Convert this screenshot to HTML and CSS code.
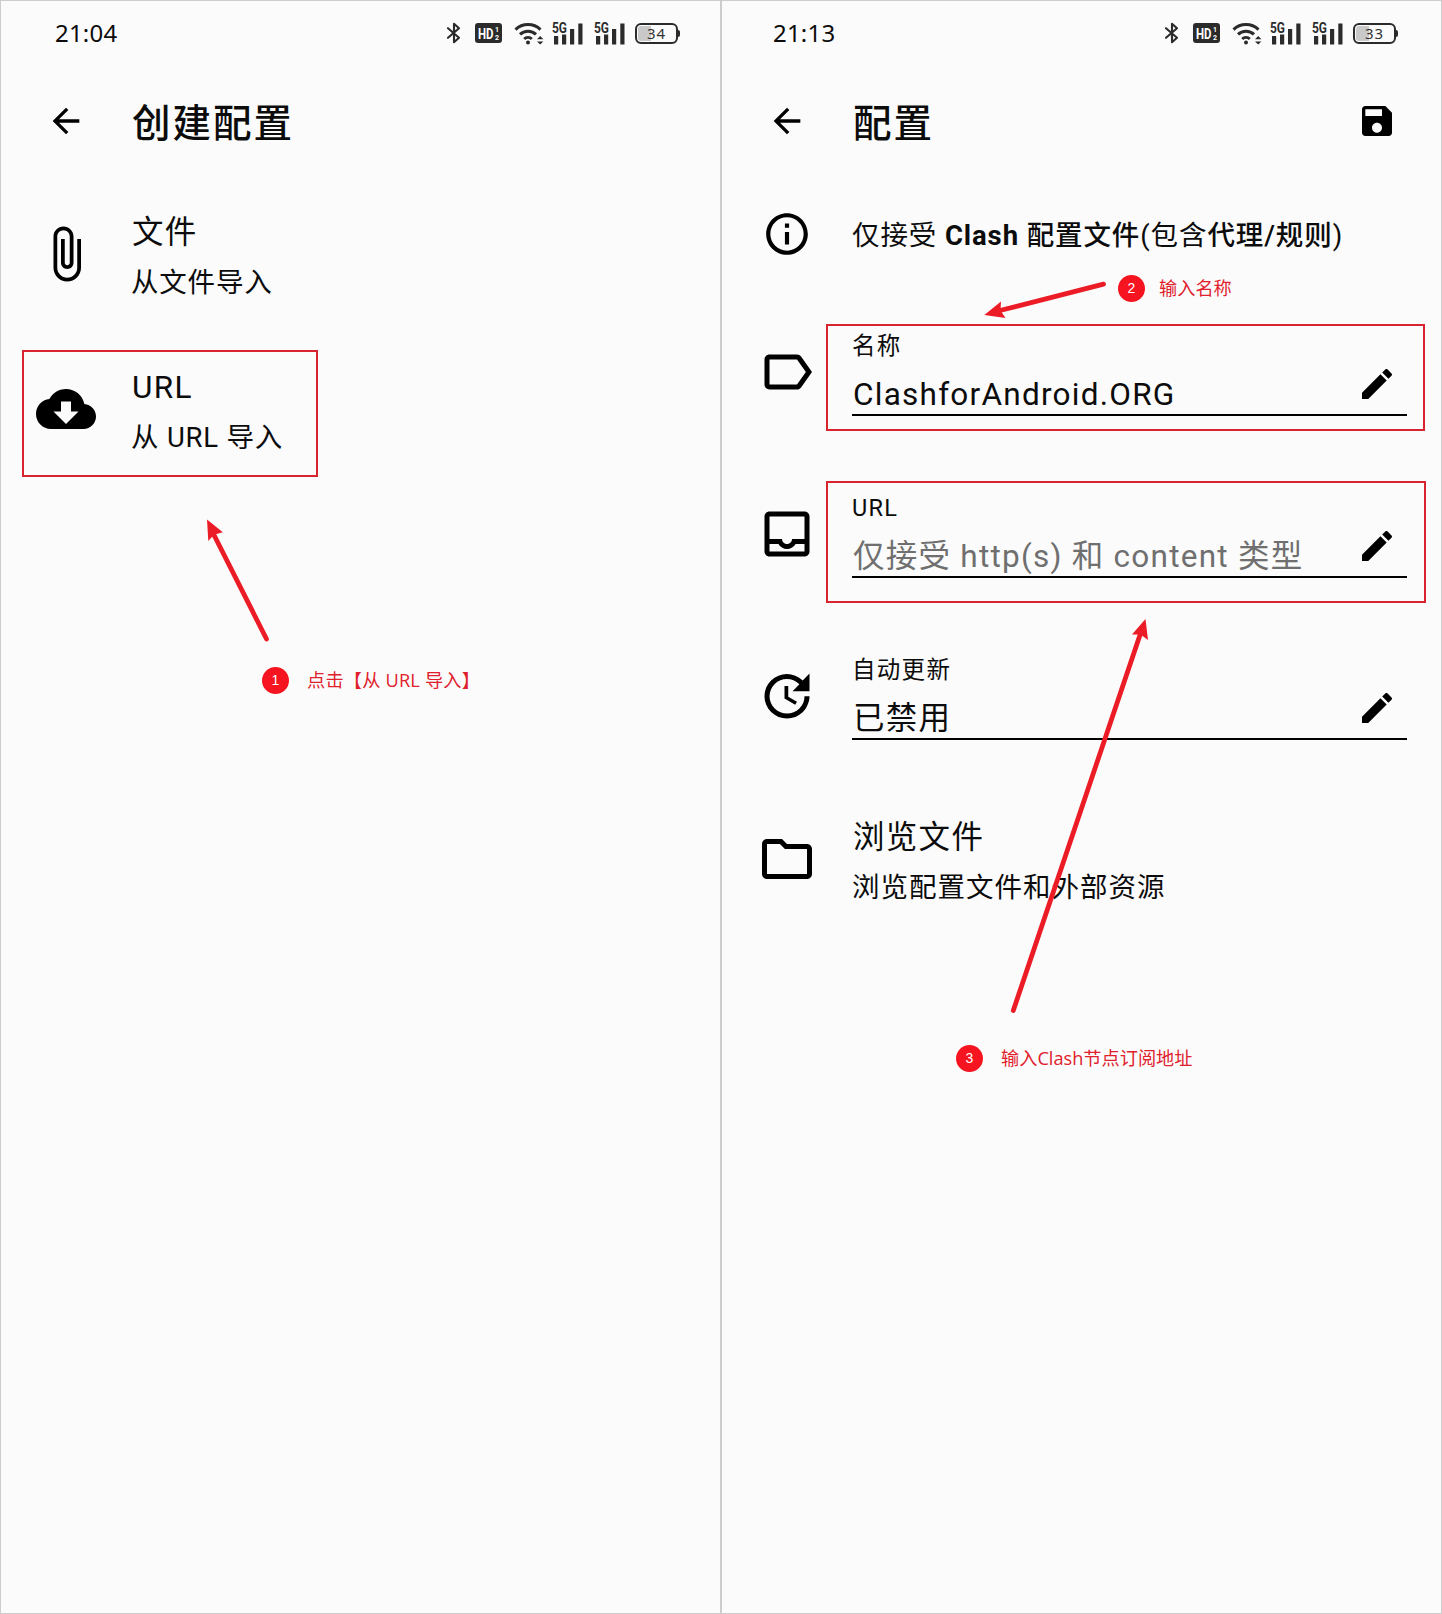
FILE: index.html
```html
<!DOCTYPE html>
<html lang="zh-CN">
<head>
<meta charset="utf-8">
<title>Clash</title>
<link rel="stylesheet" href="styles.css">
</head>
<body>
<svg class="defs" width="0" height="0" aria-hidden="true">
  <symbol id="back" viewBox="0 0 24 24"><path d="M20 11H7.83l5.59-5.59L12 4l-8 8 8 8 1.41-1.41L7.83 13H20v-2z"/></symbol>
  <symbol id="save" viewBox="0 0 24 24"><path d="M17 3H5c-1.11 0-2 .9-2 2v14c0 1.1.89 2 2 2h14c1.1 0 2-.9 2-2V7l-4-4zm-5 16c-1.66 0-3-1.34-3-3s1.34-3 3-3 3 1.34 3 3-1.34 3-3 3zm3-10H5V5h10v4z"/></symbol>
  <symbol id="attach" viewBox="0 0 24 24"><path d="M16.5 6v11.5c0 2.21-1.79 4-4 4s-4-1.79-4-4V5c0-1.38 1.12-2.5 2.5-2.5s2.5 1.12 2.5 2.5v10.5c0 .55-.45 1-1 1s-1-.45-1-1V6H10v9.5c0 1.38 1.12 2.5 2.5 2.5s2.5-1.12 2.5-2.5V5c0-2.21-1.79-4-4-4S7 2.79 7 5v12.5c0 3.04 2.46 5.5 5.5 5.5s5.5-2.46 5.5-5.5V6h-1.5z"/></symbol>
  <symbol id="cloud" viewBox="0 0 24 24"><path d="M19.35 10.04C18.67 6.59 15.64 4 12 4 9.11 4 6.6 5.64 5.35 8.04 2.34 8.36 0 10.91 0 14c0 3.31 2.69 6 6 6h13c2.76 0 5-2.24 5-5 0-2.64-2.05-4.78-4.65-4.96zM17 13l-5 5-5-5h3V9h4v4h3z"/></symbol>
  <symbol id="info" viewBox="0 0 24 24"><path d="M11 7h2v2h-2zm0 4h2v6h-2zm1-9C6.48 2 2 6.48 2 12s4.48 10 10 10 10-4.48 10-10S17.52 2 12 2zm0 18c-4.41 0-8-3.59-8-8s3.59-8 8-8 8 3.59 8 8-3.59 8-8 8z"/></symbol>
  <symbol id="label" viewBox="0 0 24 24"><path d="M17.63 5.84C17.27 5.33 16.67 5 16 5L5 5.01C3.9 5.01 3 5.9 3 7v10c0 1.1.9 1.99 2 1.99L16 19c.67 0 1.27-.33 1.63-.84L22 12l-4.37-6.16zM16 17H5V7h11l3.55 5L16 17z"/></symbol>
  <symbol id="inbox" viewBox="0 0 24 24"><path d="M19 3H5c-1.1 0-2 .9-2 2v14c0 1.1.9 2 2 2h14c1.1 0 2-.9 2-2V5c0-1.1-.9-2-2-2zm0 16H5v-3h3.56c.69 1.19 1.97 2 3.45 2s2.75-.81 3.45-2H19v3zm0-5h-4.99c0 1.1-.9 2-2 2s-2-.9-2-2H5V5h14v9z"/></symbol>
  <symbol id="update" viewBox="0 0 24 24"><path d="M21 10.12h-6.78l2.74-2.82c-2.73-2.7-7.15-2.8-9.88-.1-2.73 2.71-2.73 7.08 0 9.79s7.15 2.71 9.88 0C18.32 15.65 19 14.08 19 12.1h2c0 1.98-.88 4.55-2.64 6.29-3.51 3.48-9.21 3.48-12.72 0-3.5-3.47-3.53-9.11-.02-12.58s9.14-3.47 12.65 0L21 3v7.12zM12.5 8v4.25l3.5 2.08-.72 1.21L11 13V8h1.5z"/></symbol>
  <symbol id="folder" viewBox="0 0 24 24"><path d="M9.17 6l2 2H20v10H4V6h5.17M10 4H4c-1.1 0-1.99.9-1.99 2L2 18c0 1.1.9 2 2 2h16c1.1 0 2-.9 2-2V8c0-1.1-.9-2-2-2h-8l-2-2z"/></symbol>
  <symbol id="edit" viewBox="0 0 24 24"><path d="M3 17.25V21h3.75L17.81 9.94l-3.75-3.75L3 17.25zM20.71 7.04c.39-.39.39-1.02 0-1.41l-2.34-2.34c-.39-.39-1.02-.39-1.41 0l-1.83 1.83 3.75 3.75 1.83-1.83z"/></symbol>
  <symbol id="bluetooth" viewBox="0 0 14 22"><path d="M1 6.2l11 9.6L7 20.2V1.8l5 4.4L1 15.8" fill="none" stroke="#2b2b2b" stroke-width="2.1" stroke-linejoin="round" stroke-linecap="round"/></symbol>
  <symbol id="wifi" viewBox="0 0 31 23">
    <path d="M1.500 7.600a18 18 0 0 1 25 0M6 12.400a11.500 11.500 0 0 1 16 0M10.200 17a5.600 5.600 0 0 1 7.600 0" fill="none" stroke="#2b2b2b" stroke-width="3"/>
    <circle cx="14" cy="20.600" r="2"/><path d="M23 17.200h6.400l-3.200-3.200zM23 19.400h6.400l-3.200 3.200z"/>
  </symbol>
  <symbol id="bars" viewBox="0 0 32 23"><path d="M2 14h4.200v8.500h-4.200zM10 12.500h4.200v10h-4.200zM18 7h4.200v15.500h-4.200zM26.300 1.500h4.200v21h-4.200z"/></symbol>
</svg>

<main class="board">
  <section class="phone phone-left">
    <header class="status">
      <span class="clock">21:04</span>
      <div class="tray">
        <svg class="bt"><use href="#bluetooth"/></svg>
        <svg class="hd" viewBox="0 0 27 20"><rect width="27" height="20" rx="3"/><text x="3" y="15.500" class="hdt" textLength="15.500" lengthAdjust="spacingAndGlyphs">HD</text><text x="20" y="8.500" class="hdn">1</text><text x="20" y="17" class="hdn">2</text></svg>
        <svg class="wf"><use href="#wifi"/></svg>
        <svg class="sg" viewBox="0 0 32 23"><use href="#bars"/><text x="0" y="11" class="sig" textLength="15" lengthAdjust="spacingAndGlyphs">5G</text></svg>
        <svg class="sg" viewBox="0 0 32 23"><use href="#bars"/><text x="0" y="11" class="sig" textLength="15" lengthAdjust="spacingAndGlyphs">5G</text></svg>
        <span class="battery">34</span>
      </div>
    </header>
    <div class="appbar"><svg class="i40"><use href="#back"/></svg><h1>创建配置</h1></div>
    <div class="item">
      <svg class="i60"><use href="#attach"/></svg>
      <div class="texts"><p class="primary">文件</p><p class="secondary">从文件导入</p></div>
    </div>
    <div class="item">
      <svg class="i60"><use href="#cloud"/></svg>
      <div class="texts"><p class="primary">URL</p><p class="secondary">从 URL 导入</p></div>
    </div>
  </section>

  <section class="phone phone-right">
    <header class="status">
      <span class="clock">21:13</span>
      <div class="tray">
        <svg class="bt"><use href="#bluetooth"/></svg>
        <svg class="hd" viewBox="0 0 27 20"><rect width="27" height="20" rx="3"/><text x="3" y="15.500" class="hdt" textLength="15.500" lengthAdjust="spacingAndGlyphs">HD</text><text x="20" y="8.500" class="hdn">1</text><text x="20" y="17" class="hdn">2</text></svg>
        <svg class="wf"><use href="#wifi"/></svg>
        <svg class="sg" viewBox="0 0 32 23"><use href="#bars"/><text x="0" y="11" class="sig" textLength="15" lengthAdjust="spacingAndGlyphs">5G</text></svg>
        <svg class="sg" viewBox="0 0 32 23"><use href="#bars"/><text x="0" y="11" class="sig" textLength="15" lengthAdjust="spacingAndGlyphs">5G</text></svg>
        <span class="battery">33</span>
      </div>
    </header>
    <div class="appbar"><svg class="i40"><use href="#back"/></svg><h1>配置</h1><svg class="i40 action"><use href="#save"/></svg></div>
    <div class="item tip">
      <svg class="i50"><use href="#info"/></svg>
      <p class="secondary">仅接受 <b class="latin">Clash</b> <b>配置文件</b>(包含<b>代理/规则</b>)</p>
    </div>
    <div class="item field">
      <svg class="i60"><use href="#label"/></svg>
      <div class="input"><p class="caption">名称</p><div class="line"><p class="value">ClashforAndroid.ORG</p><svg class="i40"><use href="#edit"/></svg></div></div>
    </div>
    <div class="item field">
      <svg class="i60"><use href="#inbox"/></svg>
      <div class="input"><p class="caption">URL</p><div class="line"><p class="value hint">仅接受 http(s) 和 content 类型</p><svg class="i40"><use href="#edit"/></svg></div></div>
    </div>
    <div class="item field">
      <svg class="i60"><use href="#update"/></svg>
      <div class="input"><p class="caption">自动更新</p><div class="line"><p class="value">已禁用</p><svg class="i40"><use href="#edit"/></svg></div></div>
    </div>
    <div class="item browse">
      <svg class="i60"><use href="#folder"/></svg>
      <div class="texts"><p class="primary">浏览文件</p><p class="secondary">浏览配置文件和外部资源</p></div>
    </div>
  </section>

  <!-- step-by-step callouts drawn over both screens -->
  <div class="frame frame-1"></div>
  <div class="frame frame-2"></div>
  <div class="frame frame-3"></div>
  <svg class="arrows" viewBox="0 0 1442 1614">
    <path class="shaft" d="M213 533L266.500 639M998 311L1103.500 284.200M1141 632L1013.300 1010.500"/>
    <path d="M207 519.500L222.800 532.300L214 534.800L208.300 541zM984.300 315L1001 301.500L1000.500 310.500L1005.500 318zM1145.500 619L1132 634.500L1140.500 634.500L1148 640z"/>
  </svg>
  <div class="note note-1"><span class="badge">1</span><span class="note-text">点击【从 URL 导入】</span></div>
  <div class="note note-2"><span class="badge">2</span><span class="note-text">输入名称</span></div>
  <div class="note note-3"><span class="badge">3</span><span class="note-text">输入Clash节点订阅地址</span></div>
</main>
</body>
</html>
```
FILE: styles.css
```css
* { box-sizing: border-box; }
body { margin: 0; background: #fbfbfb; color: #0c0c0c; font-family: Roboto, "Noto Sans CJK SC", sans-serif; }
p, h1 { margin: 0; font-weight: 400; white-space: nowrap; }
svg { display: block; flex: none; fill: #000; }
.defs { position: absolute; }

.board { position: relative; display: grid; grid-template-columns: 722px 720px; width: 1442px; height: 1614px; overflow: hidden; }
.phone { border: 1px solid #cdcdcd; border-width: 1px 1px 1px 0; }
.phone-left { border-width: 1px 2px 1px 1px; }

/* status bar */
.status { display: flex; justify-content: space-between; align-items: center; height: 65px; padding: 0 39px 1px 54px; }
.phone-right .status { padding: 0 42px 1px 51px; }
.clock { font: 24px/30px "Noto Sans", sans-serif; letter-spacing: .2px; padding-bottom: 1px; }
.tray { display: flex; align-items: center; }
.tray svg { fill: #2b2b2b; }
.bt { width: 14px; height: 22px; margin-right: 14px; }
.hd { width: 27px; height: 20px; margin-right: 12px; }
.wf { width: 31px; height: 23px; margin-right: 7px; }
.sg { width: 32px; height: 23px; margin-right: 10px; overflow: visible; }
.sg + .battery { margin-left: -1px; }
.sig { font: 700 14.5px Roboto, sans-serif; }
.hdt { font: 700 15px Roboto, sans-serif; fill: #fff; }
.hdn { font: 700 7px Roboto, sans-serif; fill: #fff; }
.battery { position: relative; width: 43px; height: 21px; border: 2px solid #2b2b2b; border-radius: 6px; background: linear-gradient(90deg, #c9c9c9 13px, transparent 13px) content-box; padding: 1px; font: 15px/15px "Noto Sans", sans-serif; letter-spacing: 1px; text-align: center; color: #333; margin-right: 3px; }
.battery::after { content: ""; position: absolute; right: -4px; top: 5px; width: 2px; height: 7px; background: #2b2b2b; border-radius: 0 2px 2px 0; }

/* rows share an icon column and a text column */
.appbar, .item { display: grid; grid-template-columns: 130px 1fr; align-items: center; }
.appbar > svg, .item > svg { justify-self: center; }
.appbar { height: 110px; }
.phone-right .appbar { grid-template-columns: 130px 1fr 128px; }
.i40 { width: 40px; height: 40px; }
.i50 { width: 50px; height: 50px; }
.i60 { width: 60px; height: 60px; }
.appbar h1 { font-size: 38.5px; line-height: 50px; font-weight: 500; letter-spacing: 2px; padding: 5px 0 0 1px; }
.item { height: 155px; }
.texts { padding-top: 9px; }
.primary { font-size: 31.5px; line-height: 50px; letter-spacing: 1.3px; padding-left: 1px; }
.secondary { font-size: 27.5px; line-height: 50px; letter-spacing: .8px; }
.browse .secondary { letter-spacing: 1px; }
.tip { height: 115px; }
.tip .secondary { padding-top: 4px; letter-spacing: .9px; }
.tip b { font-weight: 500; }
.tip .latin { font-weight: 700; }
.field { height: 162px; }
.input { align-self: start; padding: 36px 34px 0 0; }
.caption { font-size: 23.5px; line-height: 38px; margin-bottom: -1px; letter-spacing: 1.3px; }
.line { display: flex; justify-content: space-between; height: 52px; border-bottom: 2px solid #000; padding-right: 10px; }
.value { font-size: 31.5px; line-height: 50px; letter-spacing: 1.25px; padding: 6px 0 0 1px; }
.hint { color: #6f6f6f; }
.browse { height: 163px; }

/* callouts */
.frame { position: absolute; border: 2px solid #d8242f; }
.frame-1 { left: 22px; top: 350px; width: 296px; height: 127px; }
.frame-2 { left: 826px; top: 324px; width: 599px; height: 107px; }
.frame-3 { left: 826px; top: 481px; width: 600px; height: 122px; }
.arrows { position: absolute; left: 0; top: 0; width: 1442px; height: 1614px; fill: #ec1c26; }
.shaft { stroke: #ec1c26; stroke-width: 4.8; stroke-linecap: round; fill: none; }
.note { position: absolute; display: flex; align-items: center; gap: 18px; height: 28px; color: #e0202c; font: 18.2px/28px "Open Sans", "Noto Sans CJK SC", sans-serif; white-space: nowrap; }
.note-text { padding-bottom: 1px; }
.badge { width: 27px; height: 27px; border-radius: 50%; background: #f5141f; color: #fff; font: 14px/27px "Liberation Sans", sans-serif; text-align: center; }
.note-1 { left: 262px; top: 666px; letter-spacing: .2px; }
.note-2 { left: 1118px; top: 274px; gap: 14px; }
.note-3 { left: 956px; top: 1044px; }
```
